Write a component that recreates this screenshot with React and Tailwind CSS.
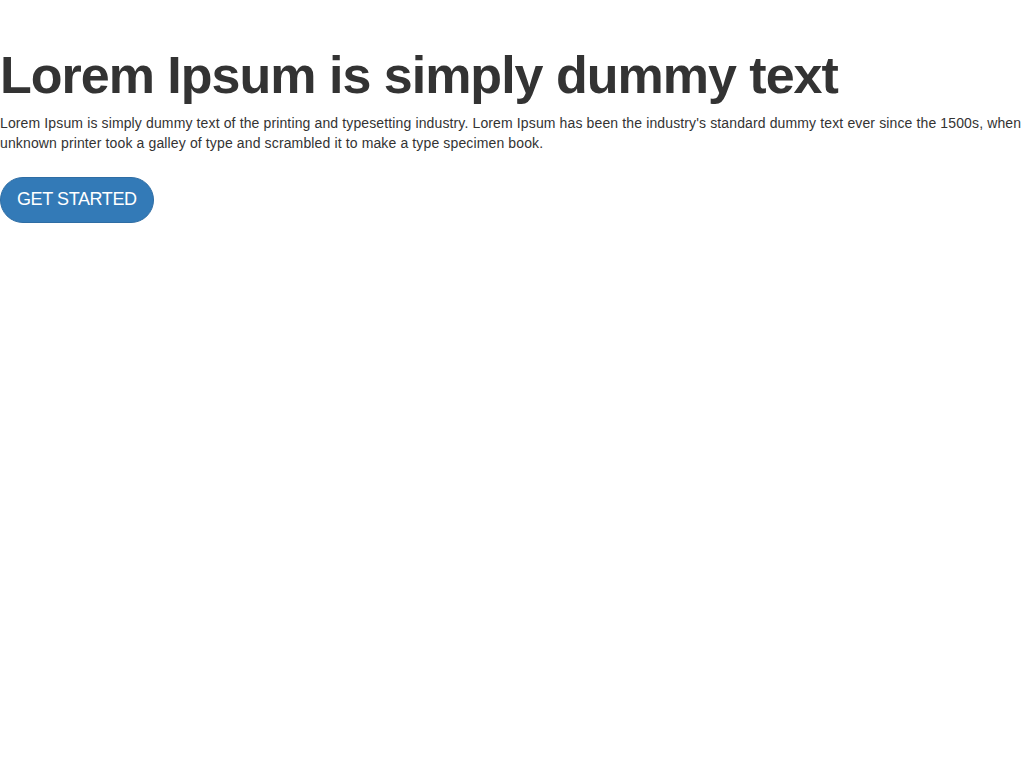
export default function App() {
  return (
    <div className="min-h-screen bg-white text-[#333] font-['Liberation_Sans',Arial,sans-serif] overflow-hidden">
      <div className="w-[1060px] pt-[47px]">
        <h1 className="text-[52px] leading-[1.1] font-bold m-0 tracking-[-1px]">Lorem Ipsum is simply dummy text</h1>
        <p className="text-[14px] leading-[20px] mt-[9px] tracking-[0.13px]">
          Lorem Ipsum is simply dummy text of the printing and typesetting industry. Lorem Ipsum has been the industry's standard dummy text ever since the 1500s, when an unknown printer took a galley of type and scrambled it to make a type specimen book.
        </p>
        <button className="mt-[24px] h-[46px] px-[16px] rounded-full bg-[#337ab7] border border-[#2e6da4] text-white text-[18px] leading-[1.33] tracking-[-0.4px]">GET STARTED</button>
      </div>
    </div>
  );
}
